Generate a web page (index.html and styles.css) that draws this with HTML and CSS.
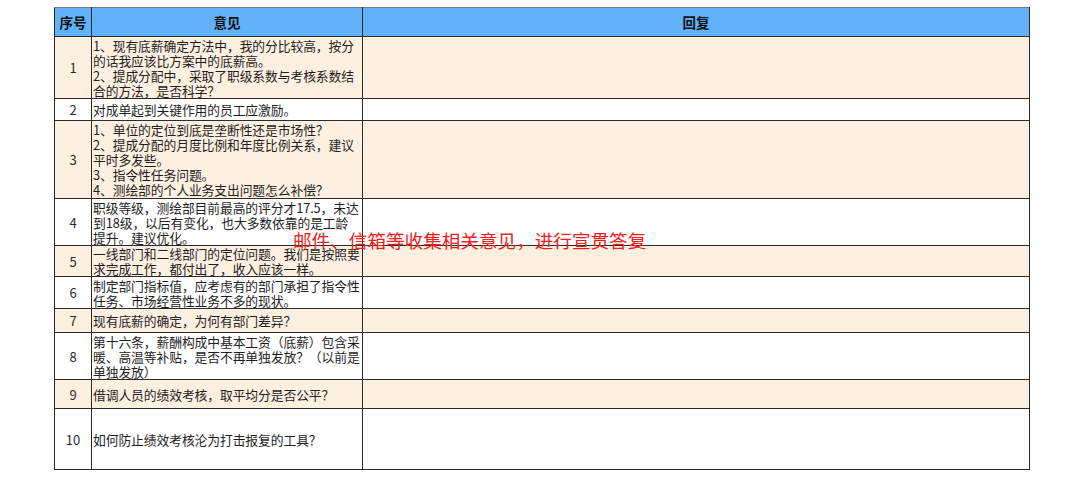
FILE: index.html
```html
<!DOCTYPE html>
<html lang="zh">
<head>
<meta charset="utf-8">
<link rel="stylesheet" href="styles.css">
</head>
<body>
<div class="page">
  <table class="sheet">
    <colgroup>
      <col class="c-no">
      <col class="c-op">
      <col class="c-re">
    </colgroup>
    <thead>
      <tr class="head">
        <th>序号</th>
        <th>意见</th>
        <th>回复</th>
      </tr>
    </thead>
    <tbody>
      <tr class="peach h62">
        <td class="no">1</td>
        <td class="op">1、现有底薪确定方法中，我的分比较高，按分<br>的话我应该比方案中的底薪高。<br>2、提成分配中，采取了职级系数与考核系数结<br>合的方法，是否科学？</td>
        <td></td>
      </tr>
      <tr class="white h22">
        <td class="no">2</td>
        <td class="op">对成单起到关键作用的员工应激励。</td>
        <td></td>
      </tr>
      <tr class="peach h78">
        <td class="no">3</td>
        <td class="op">1、单位的定位到底是垄断性还是市场性？<br>2、提成分配的月度比例和年度比例关系，建议<br>平时多发些。<br>3、指令性任务问题。<br>4、测绘部的个人业务支出问题怎么补偿？</td>
        <td></td>
      </tr>
      <tr class="white h47">
        <td class="no">4</td>
        <td class="op">职级等级，测绘部目前最高的评分才17.5，未达<br>到18级，以后有变化，也大多数依靠的是工龄<br>提升。建议优化。</td>
        <td></td>
      </tr>
      <tr class="peach h31">
        <td class="no">5</td>
        <td class="op">一线部门和二线部门的定位问题。我们是按照要<br>求完成工作，都付出了，收入应该一样。</td>
        <td></td>
      </tr>
      <tr class="white h32">
        <td class="no">6</td>
        <td class="op">制定部门指标值，应考虑有的部门承担了指令性<br>任务、市场经营性业务不多的现状。</td>
        <td></td>
      </tr>
      <tr class="peach h24">
        <td class="no">7</td>
        <td class="op">现有底薪的确定，为何有部门差异？</td>
        <td></td>
      </tr>
      <tr class="white h47">
        <td class="no">8</td>
        <td class="op">第十六条，薪酬构成中基本工资（底薪）包含采<br>暖、高温等补贴，是否不再单独发放？（以前是<br>单独发放）</td>
        <td></td>
      </tr>
      <tr class="peach h29">
        <td class="no">9</td>
        <td class="op">借调人员的绩效考核，取平均分是否公平？</td>
        <td></td>
      </tr>
      <tr class="white h61">
        <td class="no">10</td>
        <td class="op">如何防止绩效考核沦为打击报复的工具？</td>
        <td></td>
      </tr>
    </tbody>
  </table>
  <div class="note">邮件、信箱等收集相关意见，进行宣贯答复</div>
</div>
</body>
</html>
```

FILE: styles.css
```css
html, body {
  margin: 0;
  padding: 0;
  background: #ffffff;
}

.page {
  position: relative;
  padding: 7px 0 0 54px;
  font-family: "Noto Sans CJK SC", "Noto Sans", sans-serif;
  color: #1e1e1e;
}

.sheet {
  border-collapse: collapse;
  table-layout: fixed;
  width: 975px;
  font-size: 12.8px;
  line-height: 15px;
}

.c-no { width: 37px; }
.c-op { width: 271px; }
.c-re { width: 667px; }

.sheet th,
.sheet td {
  border: 1px solid #2b2b2b;
  padding: 0;
  vertical-align: middle;
  overflow: hidden;
}

.head th {
  background: #62b1fb;
  height: 28px;
  font-weight: 700;
  font-size: 13.5px;
  text-align: center;
  color: #111;
  border-top-color: #7a7a7a;
}

.peach td { background: #fdf0e1; }
.white td { background: #ffffff; }

.no {
  text-align: center;
  font-size: 13px;
  color: #2a2a2a;
}

.op {
  text-align: left;
  padding-left: 1px !important;
  white-space: nowrap;
  letter-spacing: -0.1px;
}

.h22 td { height: 21px; }
.h24 td { height: 23px; }
.h29 td { height: 28px; }
.h31 td { height: 30px; }
.h32 td { height: 31px; }
.h47 td { height: 46px; }
.h61 td { height: 60px; }
.h62 td { height: 61px; }
.h78 td { height: 77px; }

.note {
  position: absolute;
  left: 293px;
  top: 228px;
  font-size: 18.6px;
  line-height: 24px;
  color: #f21d1d;
  white-space: nowrap;
}
```
